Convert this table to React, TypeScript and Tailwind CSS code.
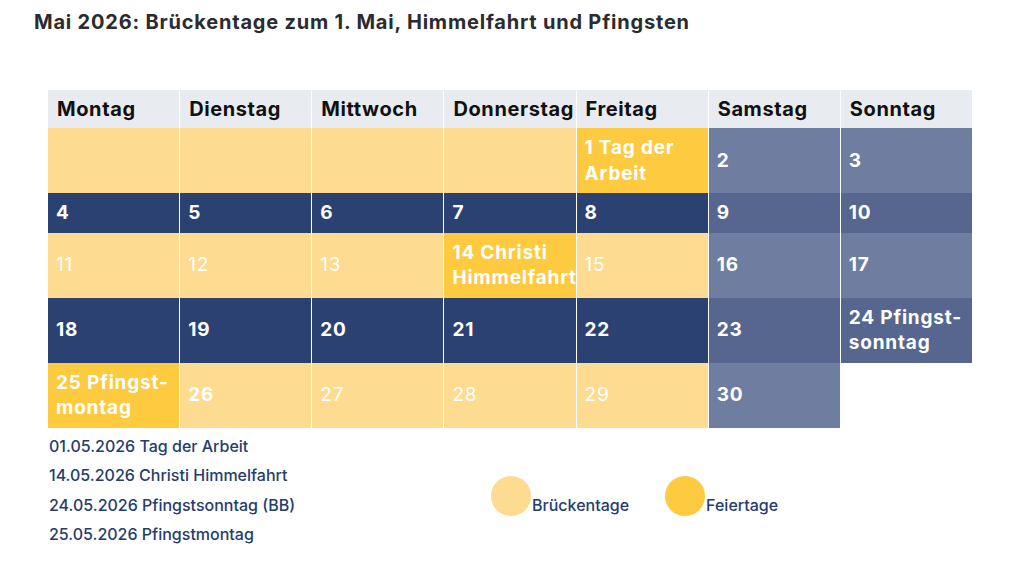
import React from "react";

type Cell = {
    text?: string;
    bg: string;
    bold?: boolean;
};

const LIGHT = "bg-[#fddb90]";
const HOLI = "bg-[#fdca40]";
const NAVY = "bg-[#2a4172]";
const WE_L = "bg-[#6e7da0]";
const WE_D = "bg-[#56668f]";
const NONE = "bg-white";

const tage = ["Montag", "Dienstag", "Mittwoch", "Donnerstag", "Freitag", "Samstag", "Sonntag"];

const rows: Cell[][] = [
    [
        { bg: LIGHT }, { bg: LIGHT }, { bg: LIGHT }, { bg: LIGHT },
        { text: "1 Tag der Arbeit", bg: HOLI, bold: true },
        { text: "2", bg: WE_L, bold: true },
        { text: "3", bg: WE_L, bold: true },
    ],
    [
        { text: "4", bg: NAVY, bold: true }, { text: "5", bg: NAVY, bold: true }, { text: "6", bg: NAVY, bold: true },
        { text: "7", bg: NAVY, bold: true }, { text: "8", bg: NAVY, bold: true },
        { text: "9", bg: WE_D, bold: true }, { text: "10", bg: WE_D, bold: true },
    ],
    [
        { text: "11", bg: LIGHT }, { text: "12", bg: LIGHT }, { text: "13", bg: LIGHT },
        { text: "14 Christi Himmelfahrt", bg: HOLI, bold: true },
        { text: "15", bg: LIGHT },
        { text: "16", bg: WE_L, bold: true }, { text: "17", bg: WE_L, bold: true },
    ],
    [
        { text: "18", bg: NAVY, bold: true }, { text: "19", bg: NAVY, bold: true }, { text: "20", bg: NAVY, bold: true },
        { text: "21", bg: NAVY, bold: true }, { text: "22", bg: NAVY, bold: true },
        { text: "23", bg: WE_D, bold: true },
        { text: "24 Pfingst-sonntag", bg: WE_D, bold: true },
    ],
    [
        { text: "25 Pfingst-montag", bg: HOLI, bold: true },
        { text: "26", bg: LIGHT, bold: true },
        { text: "27", bg: LIGHT }, { text: "28", bg: LIGHT }, { text: "29", bg: LIGHT },
        { text: "30", bg: WE_L, bold: true },
        { bg: NONE },
    ],
];

const feiertage = [
    "01.05.2026 Tag der Arbeit",
    "14.05.2026 Christi Himmelfahrt",
    "24.05.2026 Pfingstsonntag (BB)",
    "25.05.2026 Pfingstmontag",
];

function CellText({ text }: { text: string }) {
    // "Pfingst-sonntag" soll nach dem Bindestrich umbrechen
    if (text.includes("Pfingst-")) {
        const [a, b] = text.split("Pfingst-");
        return <>{a}Pfingst-<br />{b}</>;
    }
    return <>{text}</>;
}

export default function App() {
    return (
        <div className="w-[1024px] h-[562px] bg-white font-['Inter',sans-serif] overflow-hidden">
            <h1 className="pt-[8px] pl-[34px] text-[20px] leading-[28px] tracking-[0.8px] font-bold text-[#2b2b30] whitespace-nowrap">
                Mai 2026: Brückentage zum 1. Mai, Himmelfahrt und Pfingsten
            </h1>

            <div className="pl-[47px] mt-[54px]">
                <table className="table-fixed w-[926px] border-collapse">
                    <thead>
                        <tr className="bg-[#e8ebef]">
                            {tage.map(t => (
                                <th key={t} className="h-[38px] px-[9px] text-left align-middle text-[20px] leading-[25px] tracking-[0.6px] font-bold text-[#111111] border-x border-white whitespace-nowrap">
                                    {t}
                                </th>
                            ))}
                        </tr>
                    </thead>
                    <tbody>
                        {rows.map((r, i) => (
                            <tr key={i}>
                                {r.map((c, j) => (
                                    <td
                                        key={j}
                                        className={`${c.bg} px-[8px] py-[7px] align-middle text-left text-[19px] leading-[25.5px] tracking-[0.8px] text-white border-x border-white ${c.bold ? "font-bold" : "font-normal"}`}
                                    >
                                        {c.text ? <CellText text={c.text} /> : <span>&nbsp;</span>}
                                    </td>
                                ))}
                            </tr>
                        ))}
                    </tbody>
                </table>
            </div>

            <div className="flex pl-[49px] pt-[4px]">
                <ul className="w-[442px] text-[16px] leading-[29.5px] font-medium text-[#253c6d]">
                    {feiertage.map(f => <li key={f}>{f}</li>)}
                </ul>
                <div className="flex items-end mt-[44px] h-[40px]">
                    <span className="w-[40px] h-[40px] rounded-full bg-[#fddb90]" />
                    <span className="ml-[1px] text-[16px] leading-[20px] font-medium text-[#253c6d] pb-[1px]">Brückentage</span>
                    <span className="ml-[36px] w-[40px] h-[40px] rounded-full bg-[#fdca40]" />
                    <span className="ml-[1px] text-[16px] leading-[20px] font-medium text-[#253c6d] pb-[1px]">Feiertage</span>
                </div>
            </div>
        </div>
    );
}
